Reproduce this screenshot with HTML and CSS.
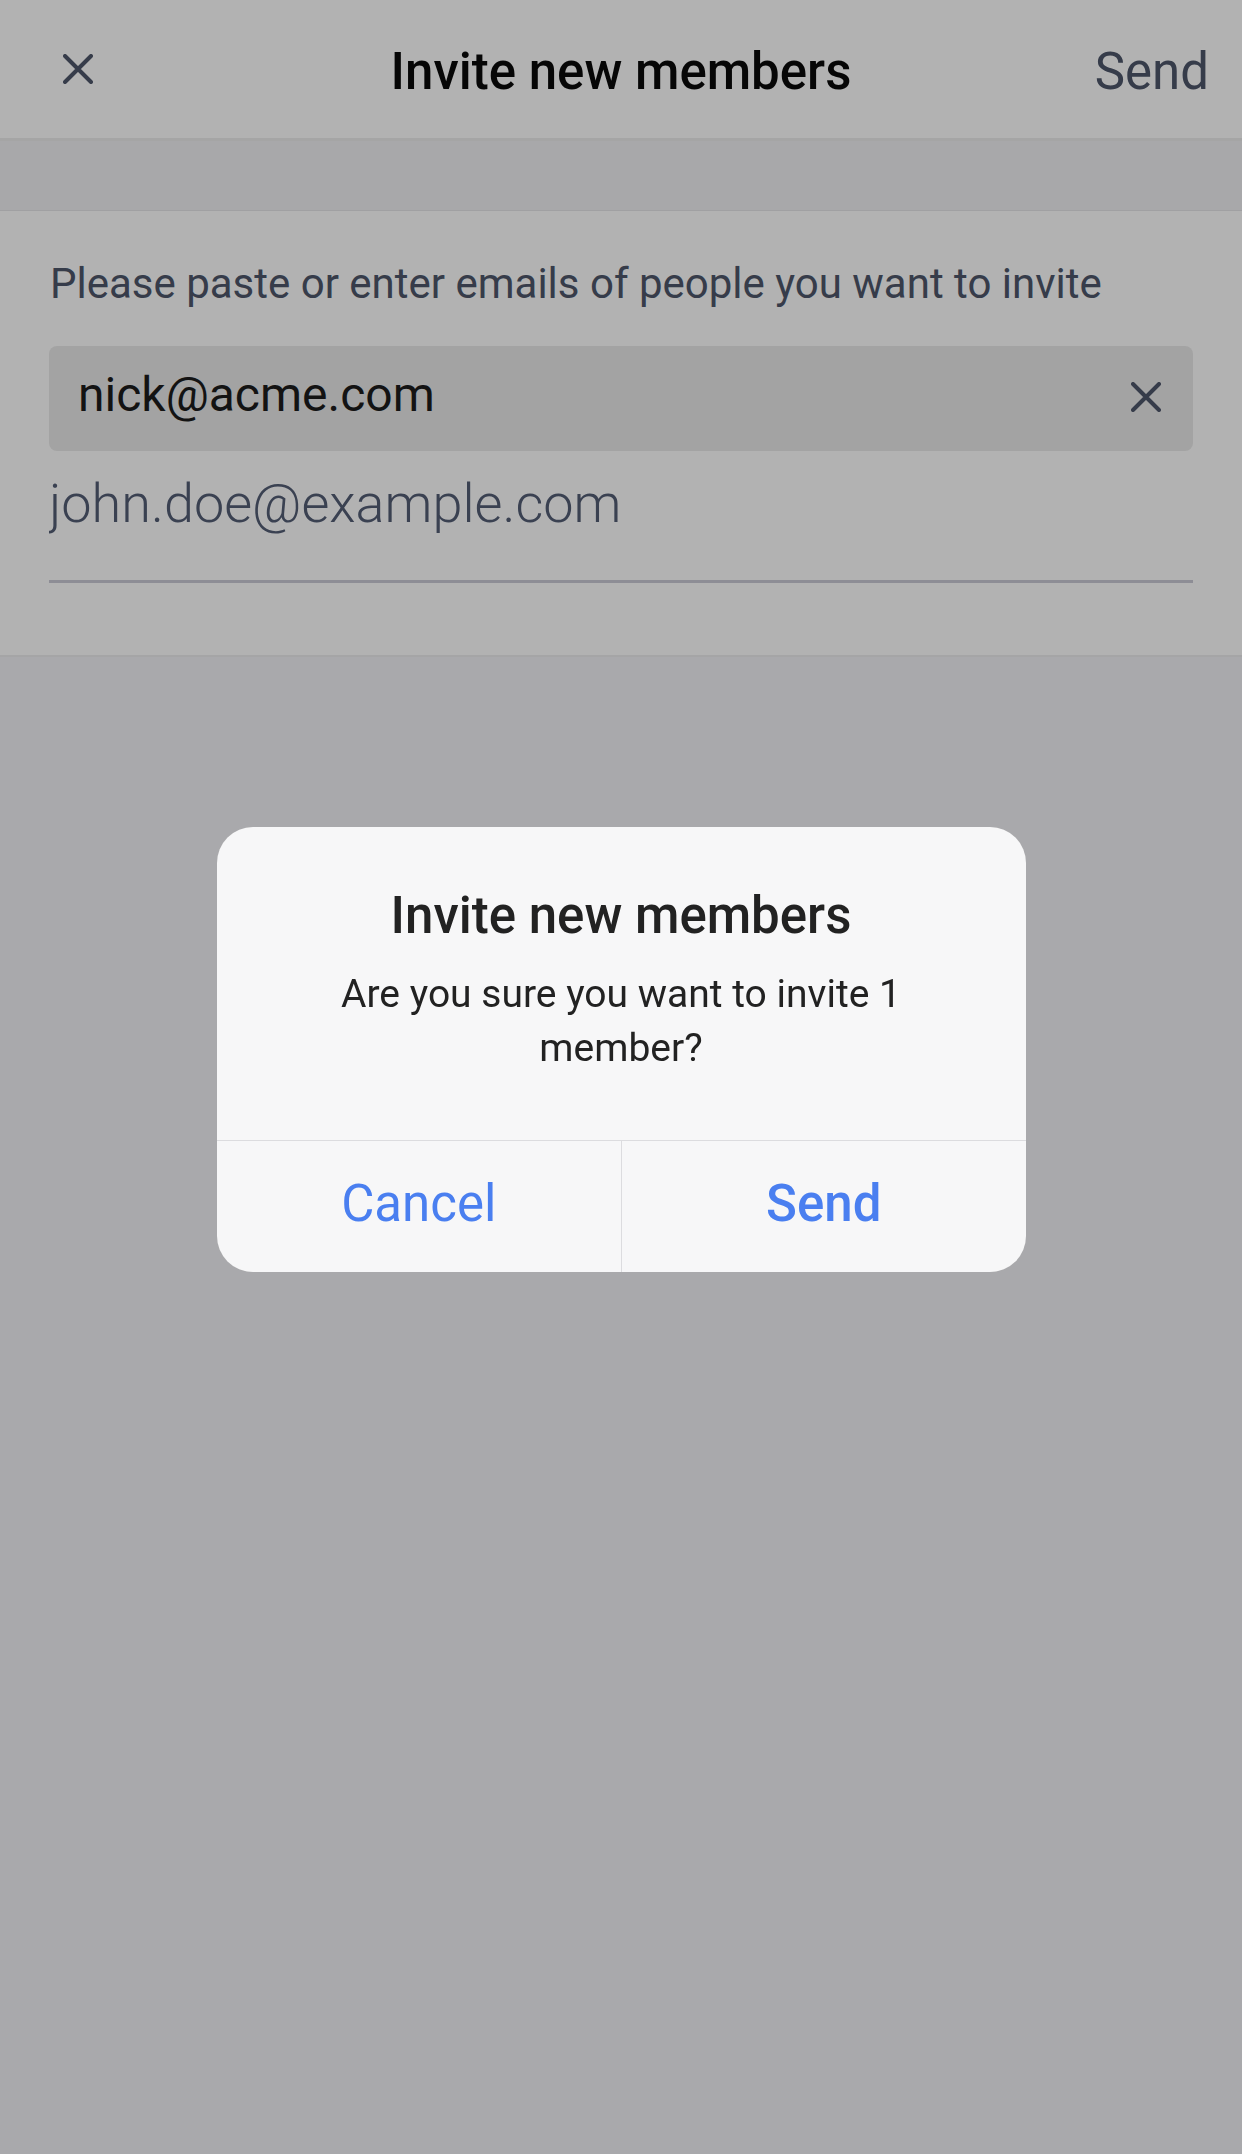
FILE: index.html
```html
<!DOCTYPE html>
<html lang="en">
<head>
    <meta charset="UTF-8">
    <meta name="viewport" content="width=device-width, initial-scale=1.0">
    <title>Invite new members</title>
    <link rel="stylesheet" href="styles.css">
</head>
<body>
    <div class="page">
        <header class="topbar">
            <button class="icon-btn close-btn" aria-label="Close">
                <svg width="30" height="30" viewBox="0 0 30 30"><path d="M2 2 L28 28 M28 2 L2 28" /></svg>
            </button>
            <h1 class="topbar-title">Invite new members</h1>
            <button class="send-link">Send</button>
        </header>

        <div class="band"></div>

        <section class="invite-form">
            <p class="hint">Please paste or enter emails of people you want to invite</p>
            <div class="chip">
                <span class="chip-text">nick@acme.com</span>
                <button class="icon-btn chip-remove" aria-label="Remove">
                    <svg width="30" height="30" viewBox="0 0 30 30"><path d="M2 2 L28 28 M28 2 L2 28" /></svg>
                </button>
            </div>
            <input type="email" class="email-input" placeholder="john.doe@example.com">
        </section>
    </div>

    <!-- confirm dialog -->
    <div class="overlay">
        <div class="dialog">
            <div class="dialog-body">
                <h2 class="dialog-title">Invite new members</h2>
                <p class="dialog-msg">Are you sure you want to invite 1 member?</p>
            </div>
            <div class="dialog-actions">
                <button class="dialog-btn">Cancel</button>
                <button class="dialog-btn primary">Send</button>
            </div>
        </div>
    </div>
</body>
</html>
```

FILE: styles.css
```css
* {
    box-sizing: border-box;
}

body {
    margin: 0;
    padding: 0;
    font-family: Roboto, "Noto Sans", sans-serif;
    background-color: #f3f3f6;
    color: #202020;
    height: 2154px;
}

button {
    font-family: inherit;
    background: none;
    border: none;
    padding: 0;
    margin: 0;
    cursor: pointer;
}

.icon-btn svg path {
    stroke: #4e566a;
    stroke-width: 4;
    stroke-linecap: round;
    fill: none;
}

/* header */
.topbar {
    height: 141px;
    background: #fff;
    border-bottom: 3px solid #ededed;
    display: grid;
    grid-template-columns: 1fr auto 1fr;
    align-items: center;
    padding: 5px 33px 0;
}

.close-btn {
    width: 30px;
    height: 30px;
    display: flex;
    justify-self: start;
    margin-left: 30px;
    margin-top: -5px;
}

.topbar-title {
    margin: 0;
    font-size: 51px;
    font-weight: 500;
    color: #0a0a0a;
    line-height: 60px;
}

.send-link {
    justify-self: end;
    font-size: 51px;
    color: #4e566a;
    line-height: 60px;
}

.band {
    height: 70px;
    background: #f1f1f4;
    border-bottom: 1px solid #e6e6e8;
}

/* form */
.invite-form {
    background: #fff;
    padding: 48px 49px 72px;
    border-bottom: 2px solid #ececee;
}

.hint {
    margin: 0;
    font-size: 42px;
    line-height: 50px;
    color: #4e566a;
    padding-left: 1px;
}

.chip {
    margin-top: 37px;
    height: 105px;
    background: #eaeaea;
    border-radius: 8px;
    display: flex;
    align-items: center;
    justify-content: space-between;
    padding: 0 32px 0 29px;
}

.chip-text {
    font-size: 48px;
    color: #1c1c1c;
    margin-top: -8px;
}

.chip-remove {
    width: 30px;
    height: 30px;
    display: flex;
    margin-top: -4px;
}

.email-input {
    display: block;
    width: 100%;
    margin-top: 21px;
    height: 111px;
    padding: 0 0 45px;
    border: none;
    border-bottom: 3px solid #cbcbd6;
    outline: none;
    background: none;
    font-family: inherit;
    font-size: 54px;
    font-weight: 300;
    color: #1c1c1c;
}

.email-input::placeholder {
    color: #535d75;
}

/* dialog */
.overlay {
    position: fixed;
    inset: 0;
    background: rgba(0, 0, 0, 0.3);
    display: flex;
    align-items: center;
    justify-content: center;
    padding-bottom: 55px;
}

.dialog {
    width: 809px;
    background: #f7f7f8;
    border-radius: 36px;
    overflow: hidden;
}

.dialog-body {
    padding: 59px 72px 65px;
    text-align: center;
}

.dialog-title {
    margin: 0;
    font-size: 51px;
    line-height: 60px;
    font-weight: 500;
    color: #222;
}

.dialog-msg {
    margin: 21px 0 0;
    font-size: 39px;
    line-height: 54px;
    color: #222;
}

.dialog-actions {
    display: grid;
    grid-template-columns: 1fr 1fr;
    border-top: 1px solid #dcdcdf;
}

.dialog-btn {
    height: 131px;
    padding-bottom: 6px;
    font-size: 51px;
    color: #4a7ff0;
}

.dialog-btn + .dialog-btn {
    border-left: 1px solid #dcdcdf;
}

.dialog-btn.primary {
    font-weight: 500;
}
```
